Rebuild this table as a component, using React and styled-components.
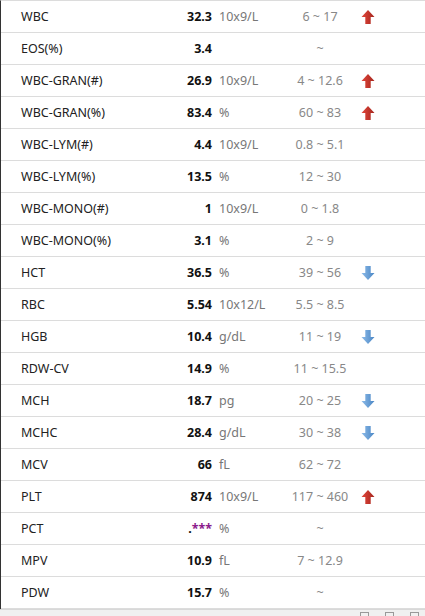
import React from "react";
import styled, { createGlobalStyle } from "styled-components";

const Global = createGlobalStyle`
  html, body { margin: 0; padding: 0; background: #fff; }
  body { font-family: "Noto Sans", "Open Sans", sans-serif; }
`;

const Page = styled.div`
  width: 425px;
  height: 616px;
  display: flex;
  flex-direction: column;
  overflow: hidden;
`;

const Table = styled.div`
  flex: 1;
  border-left: 1px solid #333;
  border-top: 1px solid #dcdcdc;
  display: flex;
  flex-direction: column;
`;

const Row = styled.div`
  height: 31px;
  border-bottom: 1px solid #dcdcdc;
  display: grid;
  grid-template-columns: 139px 52px 68px 80px 16px;
  align-items: center;
  padding-left: 20px;
  font-size: 12.5px;
`;

const Name = styled.div`
  color: #222;
`;

const Value = styled.div`
  text-align: right;
  font-weight: 700;
  color: #111;
`;

const Stars = styled.span`
  color: #8b1a8b;
`;

const Unit = styled.div`
  padding-left: 7px;
  color: #777;
`;

const Range = styled.div`
  text-align: center;
  color: #888;
`;

const Flag = styled.div`
  display: flex;
  justify-content: center;
`;

const StatusBar = styled.div`
  height: 8px;
  background: #f0f0f0;
  border-top: 1px solid #d8d8d8;
  display: flex;
  justify-content: flex-end;
  gap: 16px;
  padding-right: 6px;
`;

const Tick = styled.span`
  width: 7px;
  height: 6px;
  margin-top: 2px;
  border: 1px solid #999;
  border-bottom: none;
`;

const Arrow = ({ up }) => {
  const id = up ? "gu" : "gd";
  return (
    <svg width="14" height="16" viewBox="0 0 14 16">
      <defs>
        <linearGradient id={id} x1="0" y1="0" x2="1" y2="0">
          {up ? (
            <>
              <stop offset="0" stopColor="#e2473b" />
              <stop offset="1" stopColor="#a5261e" />
            </>
          ) : (
            <>
              <stop offset="0" stopColor="#8dbbe8" />
              <stop offset="1" stopColor="#4a86c5" />
            </>
          )}
        </linearGradient>
      </defs>
      {up ? (
        <path d="M7 1 L13.5 8 L9.7 8 L9.7 15 L4.3 15 L4.3 8 L0.5 8 Z" fill={`url(#${id})`} />
      ) : (
        <path d="M7 15 L13.5 8 L9.7 8 L9.7 1 L4.3 1 L4.3 8 L0.5 8 Z" fill={`url(#${id})`} />
      )}
    </svg>
  );
};

const rows = [
  ["WBC", "32.3", "10x9/L", "6 ~ 17", "up"],
  ["EOS(%)", "3.4", "", "~", ""],
  ["WBC-GRAN(#)", "26.9", "10x9/L", "4 ~ 12.6", "up"],
  ["WBC-GRAN(%)", "83.4", "%", "60 ~ 83", "up"],
  ["WBC-LYM(#)", "4.4", "10x9/L", "0.8 ~ 5.1", ""],
  ["WBC-LYM(%)", "13.5", "%", "12 ~ 30", ""],
  ["WBC-MONO(#)", "1", "10x9/L", "0 ~ 1.8", ""],
  ["WBC-MONO(%)", "3.1", "%", "2 ~ 9", ""],
  ["HCT", "36.5", "%", "39 ~ 56", "down"],
  ["RBC", "5.54", "10x12/L", "5.5 ~ 8.5", ""],
  ["HGB", "10.4", "g/dL", "11 ~ 19", "down"],
  ["RDW-CV", "14.9", "%", "11 ~ 15.5", ""],
  ["MCH", "18.7", "pg", "20 ~ 25", "down"],
  ["MCHC", "28.4", "g/dL", "30 ~ 38", "down"],
  ["MCV", "66", "fL", "62 ~ 72", ""],
  ["PLT", "874", "10x9/L", "117 ~ 460", "up"],
  ["PCT", "***", "%", "~", ""],
  ["MPV", "10.9", "fL", "7 ~ 12.9", ""],
  ["PDW", "15.7", "%", "~", ""],
];

export default function App() {
  return (
    <Page>
      <Global />
      <Table>
        {rows.map(([name, value, unit, range, flag]) => (
          <Row key={name}>
            <Name>{name}</Name>
            <Value>
              {value === "***" ? (
                <>
                  .<Stars>***</Stars>
                </>
              ) : (
                value
              )}
            </Value>
            <Unit>{unit}</Unit>
            <Range>{range}</Range>
            <Flag>{flag && <Arrow up={flag === "up"} />}</Flag>
          </Row>
        ))}
      </Table>
      <StatusBar>
        <Tick />
        <Tick />
        <Tick />
      </StatusBar>
    </Page>
  );
}
